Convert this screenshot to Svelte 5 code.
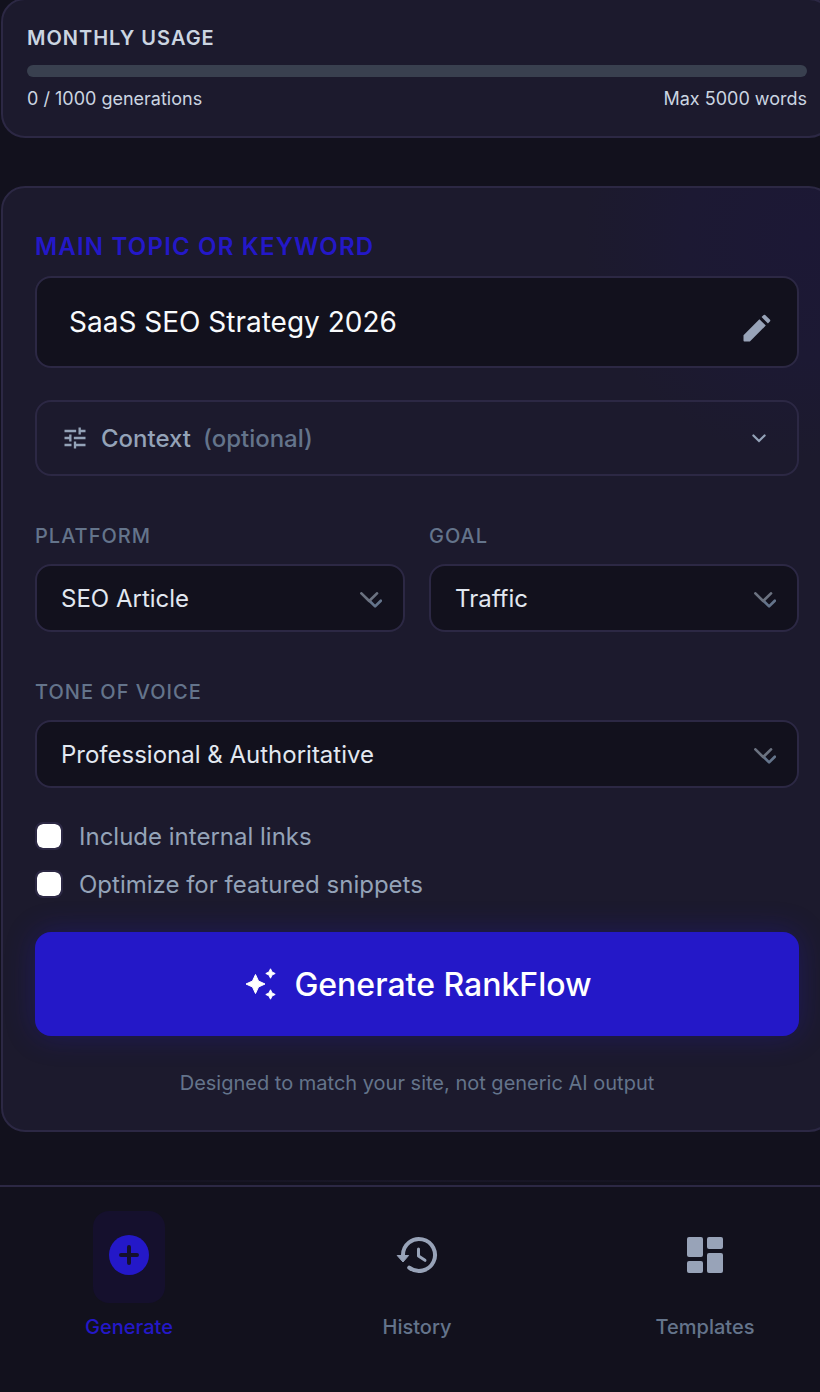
<script lang="ts">
  let topic = 'SaaS SEO Strategy 2026';
  let internalLinks = false;
  let snippets = false;
  let active = 'Generate';

  const used = 0;
  const limit = 1000;

  const tabs = ['Generate', 'History', 'Templates'];
</script>

{#snippet selectBox(value)}
  <button class="box select">
    <span>{value}</span>
    <svg width="22" height="16" viewBox="0 0 22 16" fill="none" stroke-width="2.7" stroke-linecap="round" stroke-linejoin="round">
      <path d="M9.200 8.500l5.900 5.900 5.700-5.700" stroke="#64748b" />
      <path d="M1.400 1.400l7.800 7.600 7.800-7.600" stroke="#6b7280" />
    </svg>
  </button>
{/snippet}

<div class="page">
  <section class="card usage">
    <h3>MONTHLY USAGE</h3>
    <div class="track">
      <div class="fill" style="width: {(used / limit) * 100}%"></div>
    </div>
    <div class="numbers">
      <span>{used} / {limit} generations</span>
      <span>Max 5000 words</span>
    </div>
  </section>

  <section class="card form">
    <label class="main" for="topic">MAIN TOPIC OR KEYWORD</label>
    <div class="box topic">
      <input id="topic" bind:value={topic} />
      <svg class="pencil" width="36" height="36" viewBox="0 0 24 24" fill="currentColor">
        <path d="M19.3 8.925l-4.25-4.2 1.4-1.4q.5-.4 1 0l3.250 3.250q.4.5 0 1zM17.85 10.4 7.25 21H3.6q-.6 0-.6-.6v-3.65l10.6-10.6z" />
      </svg>
    </div>

    <button class="box context">
      <svg width="28" height="28" viewBox="0 0 24 24" fill="currentColor">
        <path d="M11 21v-6h2v2h8v2h-8v2zm-8-2v-2h6v2zm4-4v-2H3v-2h4V9h2v6zm4-2v-2h10v2zm4-4V3h2v2h4v2h-4v2zM3 7V5h10v2z" />
      </svg>
      <span class="name">Context</span>
      <span class="optional">(optional)</span>
      <svg class="more" width="28" height="28" viewBox="0 0 24 24" fill="none" stroke="currentColor" stroke-width="1.9" stroke-linecap="round">
        <path d="M7.2 9.8l4.8 4.8 4.8-4.8" />
      </svg>
    </button>

    <div class="row">
      <div class="field">
        <span class="label">PLATFORM</span>
        {@render selectBox('SEO Article')}
      </div>
      <div class="field">
        <span class="label">GOAL</span>
        {@render selectBox('Traffic')}
      </div>
    </div>

    <div class="field">
      <span class="label">TONE OF VOICE</span>
      {@render selectBox('Professional & Authoritative')}
    </div>

    <div class="checks">
      <label><input type="checkbox" bind:checked={internalLinks} />Include internal links</label>
      <label><input type="checkbox" bind:checked={snippets} />Optimize for featured snippets</label>
    </div>

    <button class="generate">
      <svg width="36" height="36" viewBox="0 0 36 36" fill="currentColor" stroke="currentColor" stroke-width="1" stroke-linejoin="round">
        <path d="M13.500 8.500l3 6.500 6.500 3-6.500 3-3 6.500-3-6.500-6.500-3 6.500-3z" />
        <path d="M28.500 2.800l1.500 3.200 3.200 1.500-3.200 1.500-1.500 3.200-1.500-3.200-3.200-1.500 3.200-1.500z" />
        <path d="M28.500 23.800l1.500 3.200 3.200 1.500-3.200 1.500-1.500 3.200-1.500-3.200-3.200-1.500 3.200-1.500z" />
      </svg>
      <span>Generate RankFlow</span>
    </button>
    <p>Designed to match your site, not generic AI output</p>
  </section>

  <div class="fade"></div>
  <nav>
    {#each tabs as tab}
      <button class="tab" class:active={tab === active} on:click={() => (active = tab)}>
        <span class="tile">
          <svg width="48" height="48" viewBox="0 0 48 48">
            {#if tab === 'Generate'}
              <circle cx="24" cy="24" r="20" fill="currentColor" />
              <path d="M24 16v16M16 24h16" stroke="#15102d" stroke-width="4" stroke-linecap="round" />
            {:else if tab === 'History'}
              <path d="M10 25v-1a16 16 0 1 1 6.200 12.600" fill="none" stroke="currentColor" stroke-width="4" stroke-linecap="round" />
              <path d="M4.200 24.500h11.400L10 31z" fill="currentColor" stroke="currentColor" stroke-linejoin="round" />
              <path d="M25.500 18v7l6.500 4.300" fill="none" stroke="currentColor" stroke-width="3" stroke-linecap="round" stroke-linejoin="round" />
            {:else}
              <g fill="currentColor">
                <rect x="6" y="6" width="16" height="20" rx="2" />
                <rect x="6" y="30" width="16" height="12" rx="2" />
                <rect x="26" y="6" width="16" height="12" rx="2" />
                <rect x="26" y="22" width="16" height="20" rx="2" />
              </g>
            {/if}
          </svg>
        </span>
        <span class="caption">{tab}</span>
      </button>
    {/each}
  </nav>
</div>

<style>
  :global(body) {
    background: #12111d;
    overflow: hidden;
  }

  .page {
    height: 1392px;
    display: flex;
    flex-direction: column;
    overflow: hidden;
    font-family: Inter, 'Liberation Sans', sans-serif;
    color: #cbd5e1;
  }
  .page * {
    box-sizing: border-box;
  }
  button,
  input {
    font-family: inherit;
    color: inherit;
    margin: 0;
  }
  svg {
    flex: none;
  }

  .card {
    flex: none;
    width: 832px;
    margin-left: 1px;
    background: #1c1a2d;
    border: 2px solid #2c2844;
    border-radius: 24px;
  }
  .usage {
    height: 140px;
    margin-top: -2px;
    padding: 24px;
  }
  h3 {
    margin: 0 0 13px;
    font-size: 20px;
    line-height: 28px;
    font-weight: 600;
    letter-spacing: 1px;
  }
  .track {
    height: 12px;
    border-radius: 6px;
    background: #39404f;
    overflow: hidden;
  }
  .fill {
    height: 100%;
    background: #2418c8;
  }
  .numbers {
    display: flex;
    justify-content: space-between;
    margin-top: 8px;
    font-size: 18px;
    line-height: 28px;
  }

  .form {
    height: 946px;
    margin-top: 48px;
    padding: 41px 32px 32px;
    display: flex;
    flex-direction: column;
    background: radial-gradient(circle at 800px 50px, #1c1835 0, #1c1933 120px, #1c1a2d 220px);
  }
  .main {
    font-size: 24px;
    line-height: 36px;
    font-weight: 600;
    letter-spacing: 1.2px;
    color: #2418c8;
    margin-bottom: 11px;
  }
  .box {
    display: flex;
    align-items: center;
    width: 100%;
    border: 2px solid #2c2844;
    border-radius: 16px;
    background: #12111d;
  }
  .topic {
    height: 92px;
    padding: 0 22px 0 32px;
  }
  .topic input {
    flex: 1;
    min-width: 0;
    padding: 0;
    border: 0;
    outline: 0;
    background: none;
    font-size: 28px;
    color: #f8fafc;
  }
  .pencil {
    margin-top: 12px;
    color: #98a3b8;
  }
  .context {
    height: 76px;
    margin-top: 32px;
    padding: 0 24px;
    background: none;
    font-size: 24px;
    color: #94a3b8;
  }
  .name {
    margin-left: 12px;
    font-weight: 500;
  }
  .optional {
    margin-left: 12px;
    font-weight: 500;
    color: #64748b;
  }
  .more {
    margin-left: auto;
  }

  .row {
    display: grid;
    grid-template-columns: 1fr 1fr;
    gap: 24px;
  }
  .field {
    display: flex;
    flex-direction: column;
    margin-top: 44px;
  }
  .label {
    font-size: 20px;
    line-height: 32px;
    margin-bottom: 12px;
    font-weight: 500;
    letter-spacing: 1px;
    color: #64748b;
  }
  .select {
    height: 68px;
    padding: 0 21px 0 24px;
    justify-content: space-between;
    font-size: 24px;
    color: #e2e8f0;
  }
  .select svg {
    margin-top: 4px;
  }

  .checks {
    display: flex;
    flex-direction: column;
    gap: 12px;
    margin-top: 30px;
  }
  .checks label {
    display: flex;
    align-items: center;
    gap: 16px;
    height: 36px;
    font-size: 24px;
    color: #94a3b8;
  }
  .checks input {
    appearance: none;
    width: 28px;
    height: 28px;
    border: 2px solid #2c2844;
    border-radius: 8px;
    background: #fff;
    background-clip: padding-box;
  }
  .checks input:checked {
    background-color: #2418c8;
  }

  .generate {
    display: flex;
    align-items: center;
    justify-content: center;
    gap: 16px;
    height: 104px;
    flex: none;
    margin-top: 30px;
    padding: 0;
    border: 0;
    border-radius: 16px;
    background: #2418c8;
    box-shadow: 0 0 30px rgba(36, 24, 200, 0.3);
    font-size: 32px;
    font-weight: 500;
    color: #fff;
  }
  p {
    margin: 32px 0 0;
    font-size: 20px;
    line-height: 30px;
    text-align: center;
    color: #64748b;
  }

  .fade {
    flex: none;
    height: 2px;
    margin: 48px 0 3px;
    background: linear-gradient(90deg, transparent, #1a1829, transparent);
  }
  nav {
    flex: 1;
    width: 864px;
    margin-left: -15px;
    padding-top: 24px;
    display: grid;
    grid-template-columns: repeat(3, 1fr);
    align-items: start;
    border-top: 2px solid #2c2844;
  }
  .tab {
    display: flex;
    flex-direction: column;
    align-items: center;
    padding: 0;
    border: 0;
    background: none;
    color: #98a3b8;
  }
  .tile {
    display: flex;
    align-items: flex-start;
    justify-content: center;
    width: 72px;
    height: 92px;
    padding-top: 20px;
    border-radius: 16px;
  }
  .caption {
    margin-top: 8px;
    font-size: 20px;
    line-height: 32px;
    font-weight: 500;
    color: #64748b;
  }
  .active,
  .active .caption {
    color: #2418c8;
  }
  .active .tile {
    background: #15102d;
  }
</style>
